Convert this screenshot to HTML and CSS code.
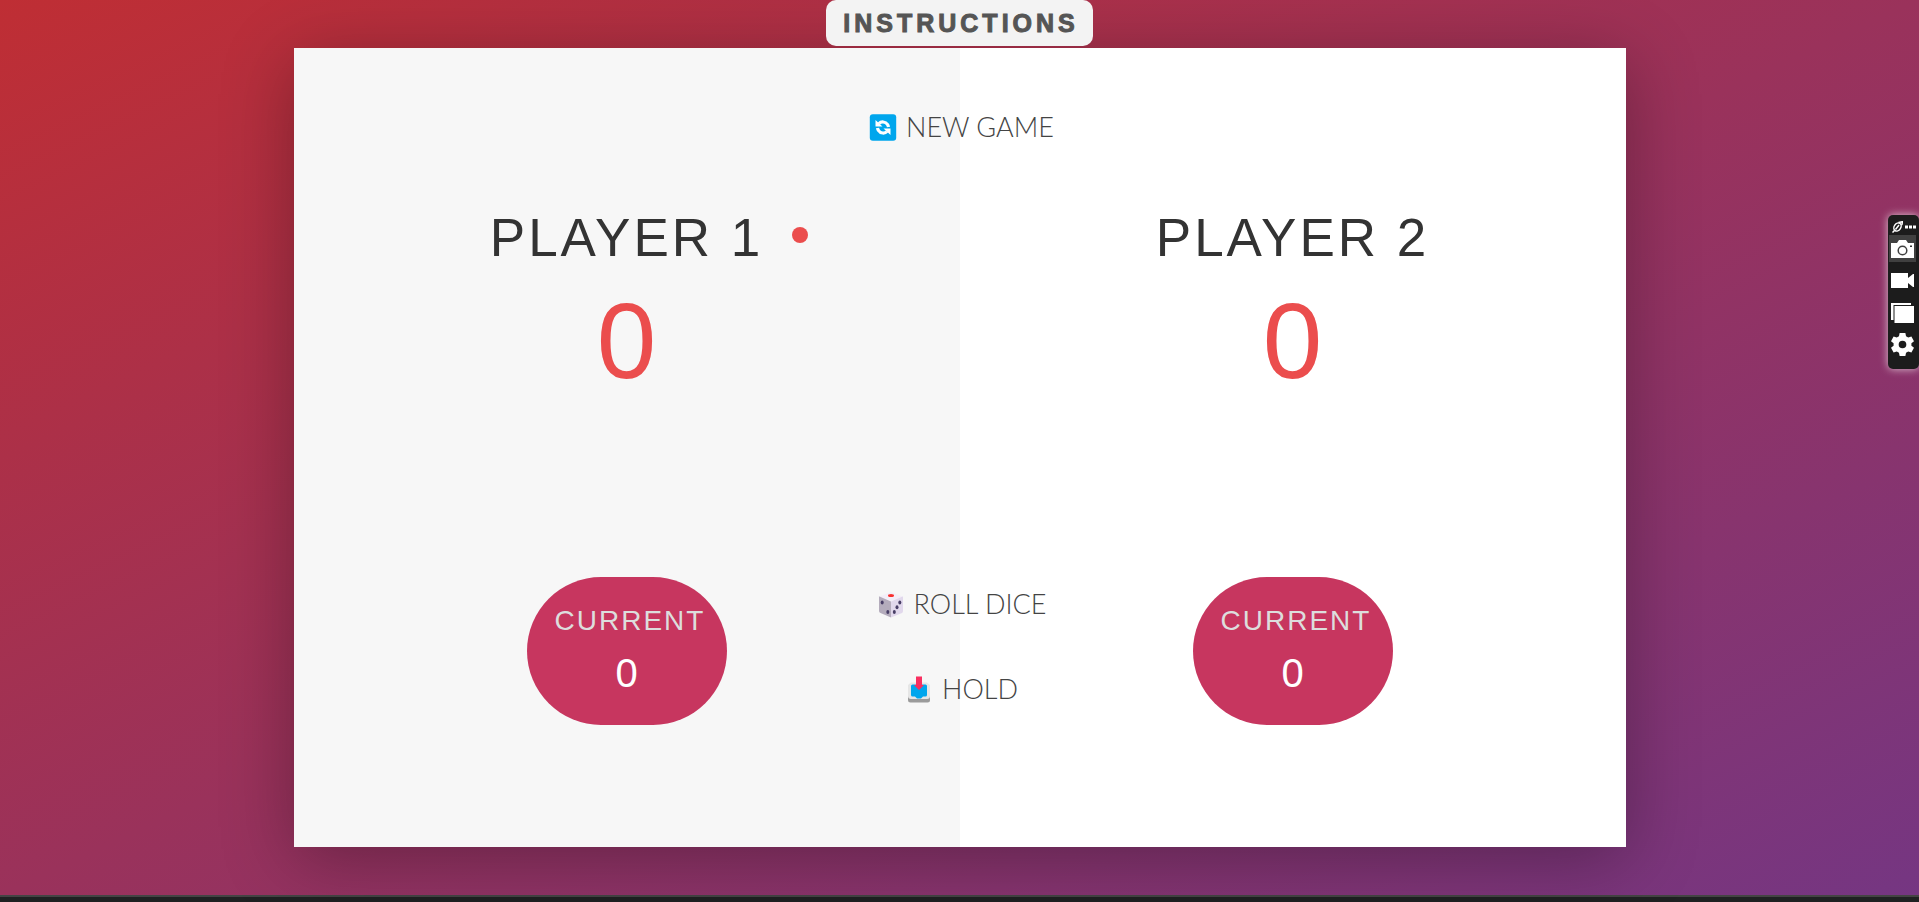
FILE: index.html
```html
<!DOCTYPE html>
<html lang="en">
<head>
<meta charset="utf-8">
<title>Pig Game</title>
<link rel="stylesheet" href="styles.css">
</head>
<body>
<div class="stage">
  <button class="instructions" type="button">INSTRUCTIONS</button>
  <main class="board">
    <section class="player player-active">
      <h1 class="name">PLAYER 1</h1>
      <p class="score">0</p>
      <div class="current">
        <p class="current-label">CURRENT</p>
        <p class="current-score">0</p>
      </div>
    </section>
    <section class="player">
      <h1 class="name">PLAYER 2</h1>
      <p class="score">0</p>
      <div class="current">
        <p class="current-label">CURRENT</p>
        <p class="current-score">0</p>
      </div>
    </section>
    <div class="controls">
      <button class="btn btn-new" type="button">
        <svg class="icon" viewBox="0 0 27 27" aria-hidden="true">
          <rect x=".3" y=".3" width="26.4" height="26.4" rx="3" fill="#00a6ed"/>
          <path d="M9.500 9.500C11.500 7.300 16 7.300 18 10.500C18.500 11.200 18.800 12 19 13" fill="none" stroke="#fff" stroke-width="3.200"/>
          <path d="M17.500 17.500C15.500 19.700 11 19.700 9 16.500C8.500 15.800 8.200 15 8 14" fill="none" stroke="#fff" stroke-width="3.200"/>
          <path d="M6 6V12.500H13ZM21 21V14.500H14Z" fill="#fff"/>
        </svg>
        <span>NEW GAME</span>
      </button>
      <button class="btn btn-roll" type="button">
        <svg class="icon" viewBox="0 0 27 27" aria-hidden="true">
          <path d="M2 5.500L13.500 1L25 5.500L13.500 10.500Z" fill="#f3eef8"/>
          <path d="M1.500 6Q1 5.300 2 5.500L13.500 10.500V26.500L3 22Q1.500 21.500 1.500 20Z" fill="#b4acbc"/>
          <path d="M25.500 6Q26 5.300 25 5.500L13.500 10.500V26.500L24.500 22Q25.500 21.500 25.500 20Z" fill="#e1d8ec"/>
          <ellipse cx="13.500" cy="4.500" rx="3" ry="1.500" fill="#f8312f"/>
          <g fill="#483e66"><ellipse cx="4.700" cy="11.500" rx="1.500" ry="2"/><ellipse cx="10.300" cy="21" rx="1.500" ry="2"/><ellipse cx="22.300" cy="11.500" rx="1.500" ry="2"/><ellipse cx="19.500" cy="16.200" rx="1.500" ry="2"/><ellipse cx="16.800" cy="21" rx="1.500" ry="2"/></g>
        </svg>
        <span>ROLL DICE</span>
      </button>
      <button class="btn" type="button">
        <svg class="icon" viewBox="0 0 27 27" aria-hidden="true">
          <path d="M2.500 18H24.500V24Q24.500 26.500 22 26.500H5Q2.500 26.500 2.500 24Z" fill="#9b9b9b"/>
          <path d="M5.500 6.500H21.500L24.500 9V20Q24.500 23 21.500 23H5.500Q2.500 23 2.500 20V9Z" fill="#e6e6e6"/>
          <path d="M7 8.500H20Q21.500 8.500 21.500 10V19Q21.500 20.500 20 20.500H17.500L15.500 22.500H11.500L9.500 20.500H7Q5.500 20.500 5.500 19V10Q5.500 8.500 7 8.500Z" fill="#00a6ed"/>
          <path d="M10.500 .5H16.500V9H18.500L13.500 14L8.500 9H10.500Z" fill="#f92f60"/>
        </svg>
        <span>HOLD</span>
      </button>
    </div>
  </main>
  <aside class="recorder" aria-label="Capture tools">
    <div class="recorder-head">
      <svg width="11" height="12" viewBox="0 0 11 12" aria-hidden="true"><ellipse cx="5.500" cy="6" rx="3.300" ry="4.300" transform="rotate(35 5.500 6)" fill="none" stroke="#fff" stroke-width="1.500"/><path d="M3.500 8.500L7 4M.5 11.500L2.500 9.500M6.500 1.500L10.500 .7L9.800 4" fill="none" stroke="#fff" stroke-width="1.500"/></svg>
      <svg width="11" height="4" viewBox="0 0 11 4" aria-hidden="true"><path d="M0 .5H3V3.500H0ZM4 .5H7V3.500H4ZM8 .5H11V3.500H8Z" fill="#fff"/></svg>
    </div>
    <button class="tool tool-on" type="button" aria-label="Take photo">
      <svg width="23" height="18" viewBox="0 0 23 18" aria-hidden="true"><path d="M0 3H6L8 0H15L17 3H23V18H0Z" fill="#fff"/><circle cx="11.500" cy="10.500" r="4.300" fill="#fff" stroke="#404040" stroke-width="1.500"/><path d="M19 5.500H21V7H19Z" fill="#333"/></svg>
    </button>
    <button class="tool" type="button" aria-label="Record video">
      <svg width="23" height="15" viewBox="0 0 23 15" aria-hidden="true"><path d="M0 0H17V5L22 1H23V14H22L17 10V15H0Z" fill="#fff"/></svg>
    </button>
    <button class="tool" type="button" aria-label="Gallery">
      <svg width="23" height="20" viewBox="0 0 23 20" aria-hidden="true"><path d="M0 0H20V2H2.500V17H0ZM3.500 3H23V20H3.500Z" fill="#fff"/></svg>
    </button>
    <button class="tool" type="button" aria-label="Settings">
      <svg width="23" height="23" viewBox="0 0 24 24" aria-hidden="true"><path fill="#fff" fill-rule="evenodd" d="M9 0H15L15.700 3.500L18 4.800L21.300 3.600L24 8.500L21.300 10.800V13.200L24 15.500L21.300 20.400L18 19.200L15.700 20.500L15 24H9L8.300 20.500L6 19.200L2.700 20.400L0 15.500L2.700 13.200V10.800L0 8.500L2.700 3.600L6 4.800L8.300 3.500ZM12 8A4 4 0 1 0 12 16A4 4 0 1 0 12 8Z"/></svg>
    </button>
  </aside>
</div>
<footer class="taskbar"></footer>
</body>
</html>
```

FILE: styles.css
```css
* { box-sizing: border-box; margin: 0; padding: 0; }

body {
  min-height: 100vh;
  display: flex;
  flex-direction: column;
  font-family: "Liberation Sans", Arial, sans-serif;
  color: #333;
}

button { border: 0; background: none; cursor: pointer; }

.stage {
  position: relative;
  flex: 1;
  display: flex;
  flex-direction: column;
  align-items: center;
  justify-content: center;
  background: linear-gradient(to top left, #753682 0%, #bf2e34 100%);
}

.instructions {
  position: absolute;
  top: 0;
  z-index: 1;
  padding: 9px 14px 9px 17px;
  border-radius: 10px;
  background: #f3f3f3;
  color: #555;
  font: 900 25px/28px "Liberation Sans", Arial, sans-serif;
  letter-spacing: 4px;
  -webkit-text-stroke: 1px #555;
}

.board {
  position: relative;
  display: grid;
  grid-template-columns: 1fr 1fr;
  width: min(1332px, 90%);
  background: #fff;
  box-shadow: 0 13px 67px rgba(0, 0, 0, 0.3);
}

.player {
  display: flex;
  flex-direction: column;
  align-items: center;
  padding: 160px 0 122px;
}

.player-active { background: #f7f7f7; }

.name {
  position: relative;
  font-size: 53px;
  line-height: 60px;
  font-weight: 400;
  letter-spacing: 3px;
}

.player-active .name::after {
  content: "";
  position: absolute;
  top: 19px;
  left: calc(100% + 29px);
  width: 16px;
  height: 16px;
  border-radius: 50%;
  background: #eb4d4d;
}

.score {
  font-size: 107px;
  line-height: 124px;
  padding-top: 11px;
  color: #eb4d4d;
}

.current {
  margin-top: 174px;
  width: 200px;
  padding: 28px;
  border-radius: 74px;
  background: #c7365f;
  color: #fff;
  text-align: center;
}

.current-label {
  margin-bottom: 13px;
  font-size: 28px;
  line-height: 32px;
  letter-spacing: 2px;
  white-space: nowrap;
  color: #ddd;
}

.current-score { font-size: 40px; line-height: 47px; margin-bottom: 0; }

.controls {
  position: absolute;
  inset: 55px 0 auto;
  display: flex;
  flex-direction: column;
  align-items: center;
  pointer-events: none;
}

.btn {
  pointer-events: auto;
  display: flex;
  align-items: center;
  gap: 5px;
  height: 48px;
  color: #444;
  font: 200 27px/32px Lato, sans-serif;
  font-weight: 300;
}

.btn-new { margin-bottom: 429px; }
.btn-roll { margin-bottom: 37px; }

.icon { width: 36px; height: 27px; }

.recorder {
  position: absolute;
  right: 0;
  top: 215px;
  display: flex;
  flex-direction: column;
  width: 31px;
  padding: 3px 3px 6px 1px;
  border-radius: 5px;
  background: #1c1c1c;
  box-shadow: 0 0 8px rgba(255, 255, 255, 0.7);
}

.recorder-head {
  display: flex;
  align-items: center;
  gap: 2px;
  height: 17px;
  padding-left: 3px;
}

.recorder-head svg { flex: none; }

.tool {
  display: flex;
  align-items: center;
  justify-content: center;
  height: 27px;
  margin-bottom: 5px;
}

.tool-on { background: #404040; }

.taskbar { height: 7px; background: #1f2122; border-top: 2px solid #444; }
```
